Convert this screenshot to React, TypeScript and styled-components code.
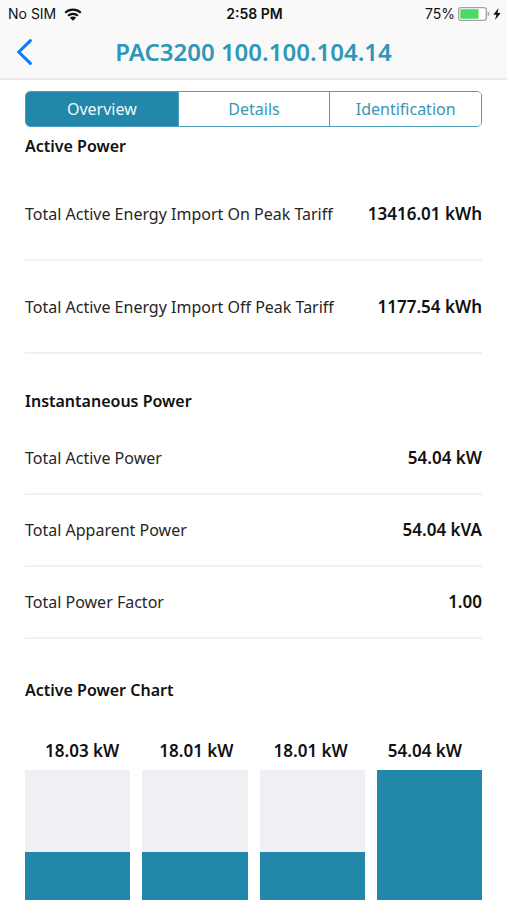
import React from "react";
import styled, { createGlobalStyle } from "styled-components";

const teal = "#2387aa";

const GlobalStyle = createGlobalStyle`
  *, *::before, *::after { box-sizing: border-box; }
  body {
    margin: 0;
    background: #fff;
    color: #111;
    font-family: "Noto Sans", sans-serif;
    font-size: 16px;
    line-height: 24px;
  }
`;

const Screen = styled.div`
  display: flex;
  flex-direction: column;
`;

const TopBar = styled.header`
  background: #f9f9f9;
  border-bottom: 2px solid #ececec;
`;

const StatusBar = styled.div`
  display: grid;
  grid-template-columns: 1fr auto 1fr;
  align-items: center;
  height: 28px;
  padding: 0 6px 0 8px;
  font-family: Inter, sans-serif;
  font-size: 14px;
  line-height: 20px;
`;

const StatusGroup = styled.div<{ $end?: boolean }>`
  display: flex;
  align-items: center;
  justify-content: ${(p) => (p.$end ? "flex-end" : "flex-start")};
  gap: ${(p) => (p.$end ? "3px" : "8px")};
`;

const Clock = styled.time`
  font-weight: 600;
`;

const NavBar = styled.div`
  display: grid;
  grid-template-columns: 48px 1fr 48px;
  align-items: center;
  height: 50px;
  padding-bottom: 3px;
`;

const BackButton = styled.button`
  display: flex;
  align-items: center;
  height: 44px;
  padding: 0 0 0 15px;
  border: 0;
  background: none;
  cursor: pointer;
`;

const Title = styled.h1`
  margin: 0;
  color: #2e97b7;
  font-size: 24px;
  font-weight: 600;
  line-height: 32px;
  text-align: center;
  white-space: nowrap;
`;

const Content = styled.main`
  padding: 11px 25px 0;
`;

const Segments = styled.div`
  display: grid;
  grid-template-columns: repeat(3, 1fr);
  height: 36px;
  border: 1px solid #4c9fba;
  border-radius: 5px;
  overflow: hidden;
`;

const Segment = styled.button<{ $active?: boolean }>`
  padding: 0;
  border: 0;
  background: ${(p) => (p.$active ? teal : "#fff")};
  color: ${(p) => (p.$active ? "#f0f8fb" : "#3a95b4")};
  font: inherit;
  cursor: pointer;

  & + & {
    border-left: 1px solid #4c9fba;
  }
`;

const Section = styled.section`
  & + & {
    margin-top: 28px;
  }

  & + &:last-child {
    margin-top: 32px;
  }
`;

const SectionTitle = styled.h2`
  margin: 0;
  padding: 7px 0 0;
  font-size: 16px;
  font-weight: 600;
  line-height: 24px;
`;

const Readings = styled.dl`
  margin: 10px 0 0;
`;

const Reading = styled.div<{ $tall?: boolean }>`
  display: flex;
  align-items: center;
  justify-content: space-between;
  gap: 12px;
  min-height: ${(p) => (p.$tall ? "93px" : "72px")};
  border-bottom: 2px solid #f1f1f2;
`;

const ReadingLabel = styled.dt`
  color: #262626;
`;

const ReadingValue = styled.dd`
  margin: 0;
  font-size: 17px;
  font-weight: 600;
  white-space: nowrap;
`;

const ChartValues = styled.div`
  display: grid;
  grid-template-columns: repeat(4, 1fr);
  margin-top: 37px;
  font-size: 17px;
  font-weight: 600;
  text-align: center;
`;

const ChartBars = styled.div`
  display: grid;
  grid-template-columns: repeat(4, 1fr);
  gap: 12px;
  margin-top: 7px;
`;

const BarTrack = styled.div`
  display: flex;
  flex-direction: column;
  justify-content: flex-end;
  height: 130px;
  background: #efeff4;
`;

const BarFill = styled.div`
  background: ${teal};
`;

const WifiIcon = () => (
  <svg width="18" height="13" viewBox="0 0 18 13" aria-label="Wi-Fi">
    <g fill="none" stroke="#111" strokeWidth="2.2">
      <path d="M1.2 4.7A11.2 11.2 0 0 1 16.8 4.7" />
      <path d="M4.1 7.8A7 7 0 0 1 13.9 7.8" />
    </g>
    <path d="M5.9 9.7A4.4 4.4 0 0 1 12.1 9.7L9 12.8Z" fill="#111" />
  </svg>
);

const BatteryIcon = () => (
  <svg width="32" height="14" viewBox="0 0 32 14" aria-label="Battery charging">
    <rect x="0.7" y="0.7" width="27.6" height="12.6" rx="2.4" fill="#fff" stroke="#a3a3a3" strokeWidth="1.3" />
    <rect x="2.3" y="2.3" width="18.2" height="9.4" rx="0.6" fill="#4cd964" />
    <path d="M29.7 4.6Q31.4 5.2 31.4 7T29.7 9.4Z" fill="#a3a3a3" />
  </svg>
);

const BoltIcon = () => (
  <svg width="8" height="12" viewBox="0 0 8 12" aria-hidden="true">
    <path d="M5.6 0L0.3 6.8H3.4L2 12L7.7 4.9H4.5Z" fill="#111" />
  </svg>
);

const ChevronIcon = () => (
  <svg width="18" height="28" viewBox="0 0 18 28" aria-hidden="true">
    <path d="M15.4 2.6L3.8 14L15.4 25.4" fill="none" stroke="#0a7aff" strokeWidth="3" strokeLinecap="round" />
  </svg>
);

const tabs = ["Overview", "Details", "Identification"];

const energy = [
  { label: "Total Active Energy Import On Peak Tariff", value: "13416.01 kWh" },
  { label: "Total Active Energy Import Off Peak Tariff", value: "1177.54 kWh" },
];

const instantaneous = [
  { label: "Total Active Power", value: "54.04 kW" },
  { label: "Total Apparent Power", value: "54.04 kVA" },
  { label: "Total Power Factor", value: "1.00" },
];

const phases = [
  { value: "18.03 kW", level: 37 },
  { value: "18.01 kW", level: 37 },
  { value: "18.01 kW", level: 37 },
  { value: "54.04 kW", level: 100 },
];

export default function App() {
  const [active, setActive] = React.useState(tabs[0]);

  return (
    <Screen>
      <GlobalStyle />
      <TopBar>
        <StatusBar>
          <StatusGroup>
            <span>No SIM</span>
            <WifiIcon />
          </StatusGroup>
          <Clock>2:58 PM</Clock>
          <StatusGroup $end>
            <span>75%</span>
            <BatteryIcon />
            <BoltIcon />
          </StatusGroup>
        </StatusBar>
        <NavBar>
          <BackButton aria-label="Back">
            <ChevronIcon />
          </BackButton>
          <Title>PAC3200 100.100.104.14</Title>
        </NavBar>
      </TopBar>
      <Content>
        <Segments>
          {tabs.map((tab) => (
            <Segment key={tab} $active={tab === active} aria-pressed={tab === active} onClick={() => setActive(tab)}>
              {tab}
            </Segment>
          ))}
        </Segments>
        <Section>
          <SectionTitle>Active Power</SectionTitle>
          <Readings>
            {energy.map((r) => (
              <Reading key={r.label} $tall>
                <ReadingLabel>{r.label}</ReadingLabel>
                <ReadingValue>{r.value}</ReadingValue>
              </Reading>
            ))}
          </Readings>
        </Section>
        <Section>
          <SectionTitle>Instantaneous Power</SectionTitle>
          <Readings>
            {instantaneous.map((r) => (
              <Reading key={r.label}>
                <ReadingLabel>{r.label}</ReadingLabel>
                <ReadingValue>{r.value}</ReadingValue>
              </Reading>
            ))}
          </Readings>
        </Section>
        <Section>
          <SectionTitle>Active Power Chart</SectionTitle>
          <ChartValues>
            {phases.map((p, i) => (
              <span key={i}>{p.value}</span>
            ))}
          </ChartValues>
          <ChartBars>
            {phases.map((p, i) => (
              <BarTrack key={i}>
                <BarFill style={{ height: `${p.level}%` }} />
              </BarTrack>
            ))}
          </ChartBars>
        </Section>
      </Content>
    </Screen>
  );
}
